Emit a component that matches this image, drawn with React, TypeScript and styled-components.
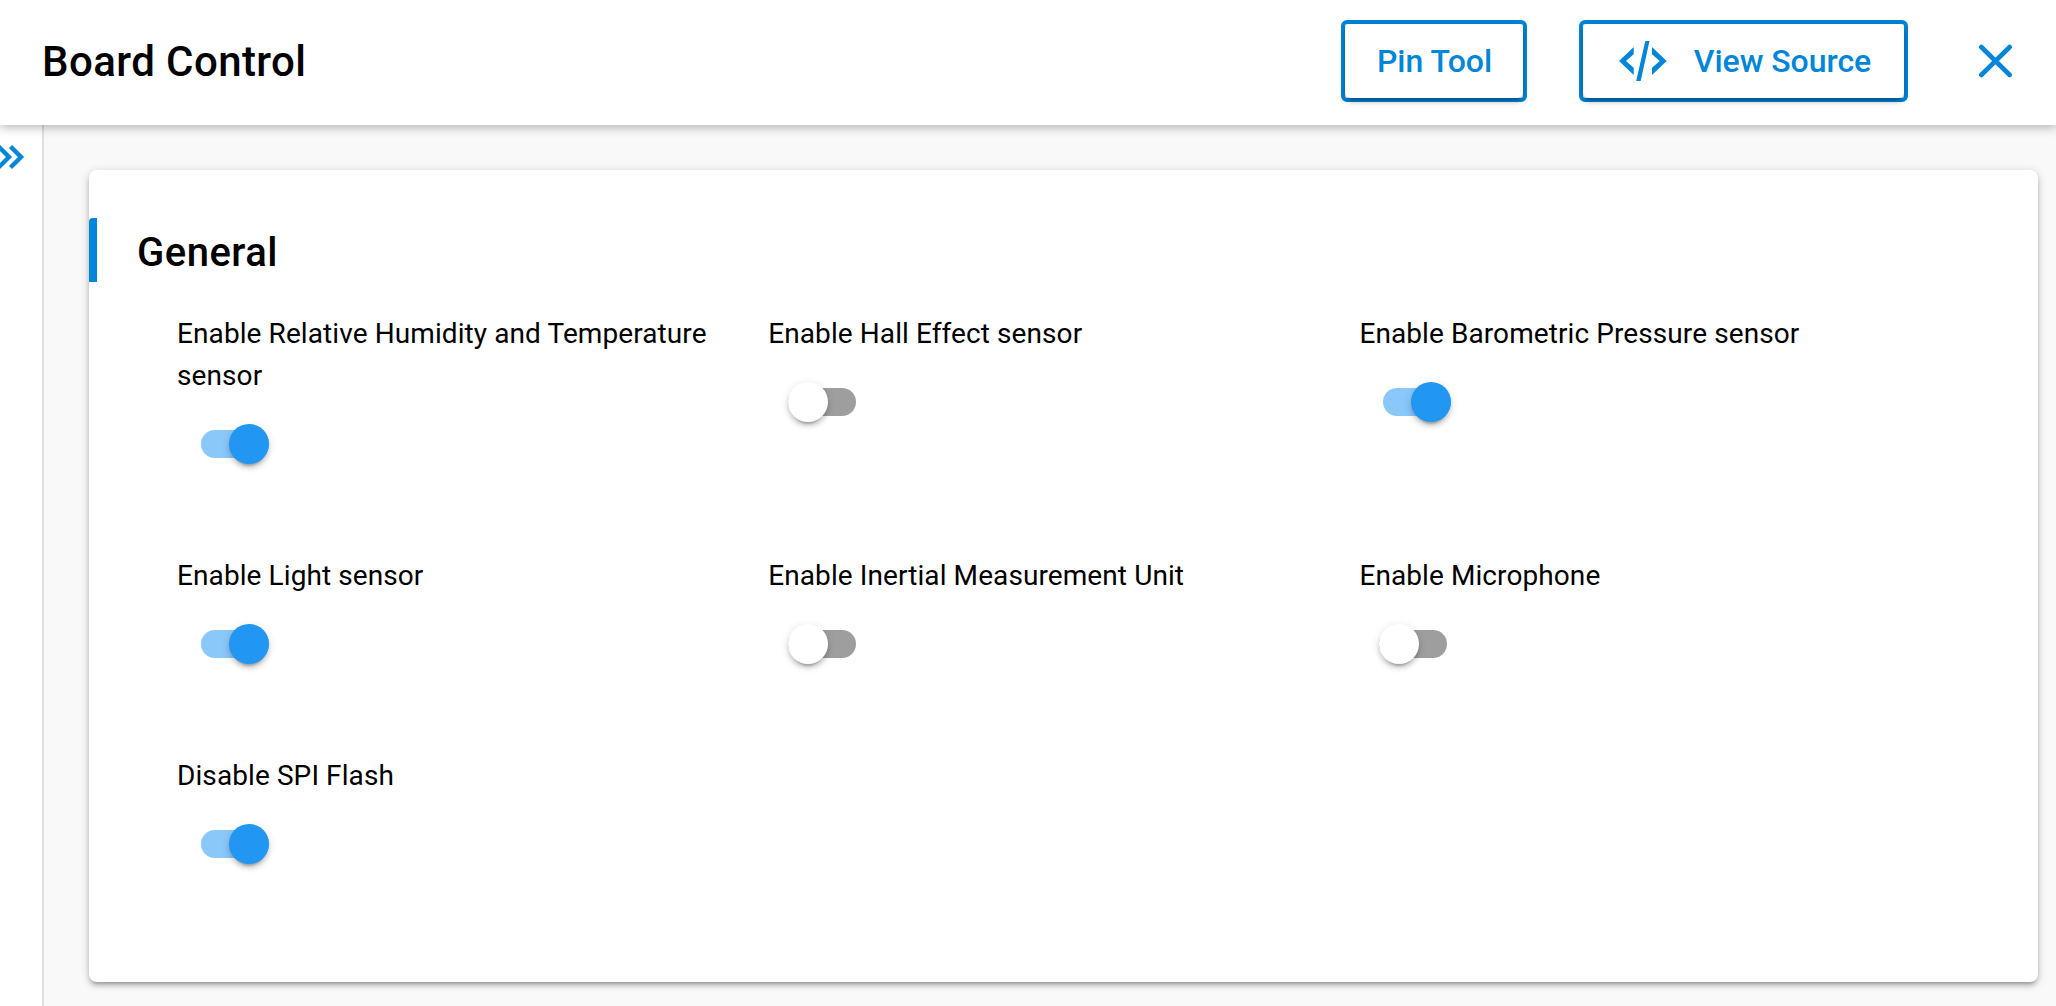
import React from "react";
import styled, { createGlobalStyle } from "styled-components";

const blue = "#0086d9";
const cardShadow =
  "0 2px 10px rgba(0,0,0,.2), 0 4px 4px rgba(0,0,0,.14), 0 6px 2px -4px rgba(0,0,0,.12)";

const GlobalStyle = createGlobalStyle`
  * { box-sizing: border-box; }
  body { margin: 0; background: #f9f9f9; color: #000; font-family: Roboto, "Liberation Sans", sans-serif; overflow: hidden; }
`;

const Page = styled.div`
  display: flex;
  flex-direction: column;
  height: 100vh;
`;

const Header = styled.header`
  position: relative;
  z-index: 1;
  flex: none;
  display: flex;
  align-items: center;
  height: 125px;
  padding: 0 43px 3px 42px;
  background: #fff;
  box-shadow: 0 2px 10px rgba(0,0,0,.31);
`;

const Title = styled.h1`
  flex: 1;
  margin: 0;
  padding-top: 2px;
  font-size: 42px;
  line-height: 64px;
  font-weight: 500;
  letter-spacing: 0.01em;
`;

const OutlineButton = styled.button<{ $width: number; $gap: number; $shift: number }>`
  position: relative;
  display: flex;
  align-items: center;
  justify-content: center;
  width: ${(p) => p.$width}px;
  height: 82px;
  margin-right: ${(p) => p.$gap}px;
  padding: 0 0 0 ${(p) => p.$shift}px;
  border: 4px solid ${blue};
  border-radius: 6px;
  background: #fff;
  color: ${blue};
  font: 500 32px/54px Roboto, sans-serif;
  letter-spacing: -0.04px;
  white-space: nowrap;
  &::before {
    content: "";
    position: absolute;
    inset: 0;
    border-radius: 6px;
    box-shadow: ${cardShadow};
  }
  svg { margin-right: 27px; }
`;

const IconButton = styled.button`
  display: flex;
  padding: 0;
  border: 0;
  background: none;
  color: ${blue};
`;

const Body = styled.div`
  flex: 1;
  display: flex;
  min-height: 0;
`;

const Sidebar = styled.aside`
  width: 44px;
  padding-top: 19px;
  background: #fff;
  border-right: 2px solid #e0e0e0;
  color: ${blue};
`;

const Main = styled.main`
  flex: 1;
  padding: 45px 18px 24px 45px;
`;

const Card = styled.section`
  height: 812px;
  padding-top: 48px;
  border-radius: 8px;
  background: #fff;
  box-shadow: ${cardShadow};
`;

const SectionTitle = styled.h2`
  height: 64px;
  margin: 0;
  padding: 3px 0 0 48px;
  background: linear-gradient(${blue}, ${blue}) left / 8px 100% no-repeat;
  border-top-left-radius: 4px;
  font-size: 40px;
  line-height: 64px;
  font-weight: 500;
  letter-spacing: 0.0125em;
`;

const Options = styled.div`
  display: grid;
  grid-template-columns: repeat(3, 591.2px);
  padding: 31px 0 0 88px;
`;

const Option = styled.div`
  padding-bottom: 78px;
`;

const Label = styled.div`
  font-size: 28px;
  line-height: 42px;
  letter-spacing: 0.09px;
`;

const Toggle = styled.div<{ $on: boolean }>`
  display: flex;
  align-items: center;
  justify-content: ${(p) => (p.$on ? "flex-end" : "flex-start")};
  width: 68px;
  height: 28px;
  margin: 33px 0 19px ${(p) => (p.$on ? 24 : 20)}px;
  border-radius: 14px;
  background: ${(p) => (p.$on ? "#8ac8fa" : "#9e9e9e")};
`;

const Thumb = styled.span<{ $on: boolean }>`
  flex: none;
  width: 40px;
  height: 40px;
  border-radius: 50%;
  background: ${(p) => (p.$on ? "#2196f3" : "#fff")};
  box-shadow: 0 6px 2px -4px rgba(0,0,0,.2), 0 4px 4px rgba(0,0,0,.14), 0 2px 10px rgba(0,0,0,.12);
`;

const options = [
  { label: "Enable Relative Humidity and Temperature sensor", on: true },
  { label: "Enable Hall Effect sensor", on: false },
  { label: "Enable Barometric Pressure sensor", on: true },
  { label: "Enable Light sensor", on: true },
  { label: "Enable Inertial Measurement Unit", on: false },
  { label: "Enable Microphone", on: false },
  { label: "Disable SPI Flash", on: true },
];

const CodeIcon = () => (
  <svg width="48" height="42" viewBox="0 0 48 42" fill="currentColor">
    <path d="M14.700 7v7.200L7 21l7.700 6.800V35L0 21z M33 7v7.200l7.700 6.800-7.700 6.800V35l14.700-14z M26.300 1h4.200L21.700 41h-4.500z" />
  </svg>
);

const CloseIcon = () => (
  <svg width="34" height="34" viewBox="0 0 34 34" fill="none" stroke="currentColor" strokeWidth="4.600" strokeLinecap="round">
    <path d="M2.300 3l28.400 28M30.700 3L2.300 31" />
  </svg>
);

const ExpandIcon = () => (
  <svg width="26" height="26" viewBox="0 0 26 26" fill="none" stroke="currentColor" strokeWidth="4.400" display="block">
    <path d="M-1.500 2.500L9 13-1.500 23.500M10.500 2.500L21 13 10.500 23.500" />
  </svg>
);

export default function App() {
  return (
    <Page>
      <GlobalStyle />
      <Header>
        <Title>Board Control</Title>
        <OutlineButton $width={186} $gap={52} $shift={1}>Pin Tool</OutlineButton>
        <OutlineButton $width={329} $gap={71} $shift={3}>
          <CodeIcon />
          View Source
        </OutlineButton>
        <IconButton aria-label="Close">
          <CloseIcon />
        </IconButton>
      </Header>
      <Body>
        <Sidebar>
          <ExpandIcon />
        </Sidebar>
        <Main>
          <Card>
            <SectionTitle>General</SectionTitle>
            <Options>
              {options.map((o) => (
                <Option key={o.label}>
                  <Label>{o.label}</Label>
                  <Toggle $on={o.on} role="switch" aria-checked={o.on}>
                    <Thumb $on={o.on} />
                  </Toggle>
                </Option>
              ))}
            </Options>
          </Card>
        </Main>
      </Body>
    </Page>
  );
}
